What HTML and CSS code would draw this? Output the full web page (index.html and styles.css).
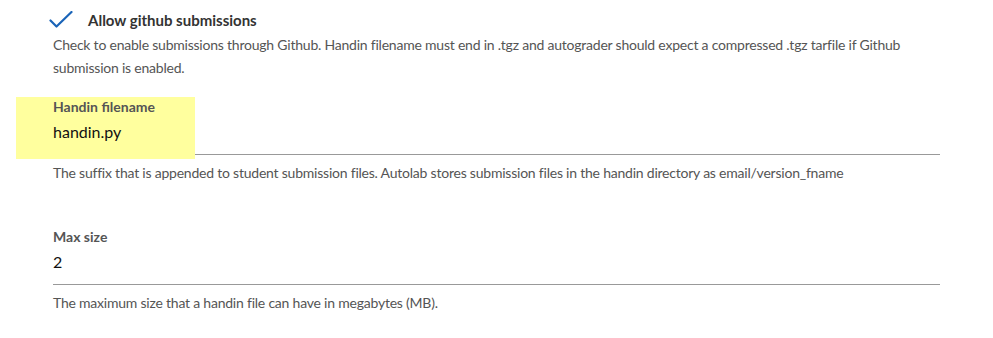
FILE: index.html
```html
<!DOCTYPE html>
<html>
<head>
<meta charset="utf-8">
<link rel="stylesheet" href="styles.css">
</head>
<body>
<div class="page">
  <div class="check-row">
    <svg class="check-icon" width="24" height="18" viewBox="0 0 24 18"><path d="M1.5 9.5 L7.5 15.5 L22.5 1" fill="none" stroke="#1a64b8" stroke-width="2.2" stroke-linecap="round" stroke-linejoin="round"/></svg>
    <span class="check-label">Allow github submissions</span>
  </div>
  <p class="help">Check to enable submissions through Github. Handin filename must end in .tgz and autograder should expect a compressed .tgz tarfile if Github submission is enabled.</p>

  <div class="field highlighted">
    <div class="field-inner">
      <label class="field-label">Handin filename</label>
      <div class="field-value">handin.py</div>
    </div>
  </div>
  <p class="help field-help">The suffix that is appended to student submission files. Autolab stores submission files in the handin directory as email/version_fname</p>

  <div class="field second">
    <div class="field-inner">
      <label class="field-label">Max size</label>
      <div class="field-value">2</div>
    </div>
  </div>
  <p class="help field-help">The maximum size that a handin file can have in megabytes (MB).</p>
</div>
</body>
</html>
```
FILE: styles.css
```css
html, body {
  margin: 0;
  padding: 0;
}
html {
  background: #ffffff;
}
body {
  font-family: "Lato", "Open Sans", sans-serif;
  color: #333;
}
.page {
  width: 887px;
  padding: 0 53px;
}
.check-row {
  display: flex;
  align-items: center;
  height: 27px;
  padding-top: 6px;
  margin-left: -4px;
}
.check-icon {
  margin-right: 15px;
  margin-top: 1px;
}
.check-label {
  font-size: 15px;
  font-weight: 700;
  color: #333;
}
.help {
  margin: 0;
  font-size: 14px;
  line-height: 23px;
  color: #555;
  letter-spacing: -0.22px;
}
.field {
  position: relative;
  isolation: isolate;
  border-bottom: 1px solid #999;
}
.field.highlighted {
  margin-top: 13px;
}
.field.highlighted::before {
  content: "";
  position: absolute;
  left: -37px;
  top: 5px;
  width: 179px;
  height: 62px;
  background: #ffff9e;
  z-index: -1;
}
.field.second {
  margin-top: 38px;
}
.field-inner {
  padding: 6px 0 11px;
}
.field-label {
  display: block;
  font-size: 14px;
  font-weight: 700;
  color: #555;
  line-height: 18px;
}
.field-value {
  font-size: 16px;
  color: #111;
  line-height: 22px;
  margin-top: 5px;
}
.field-help {
  margin-top: 6px;
}
```
